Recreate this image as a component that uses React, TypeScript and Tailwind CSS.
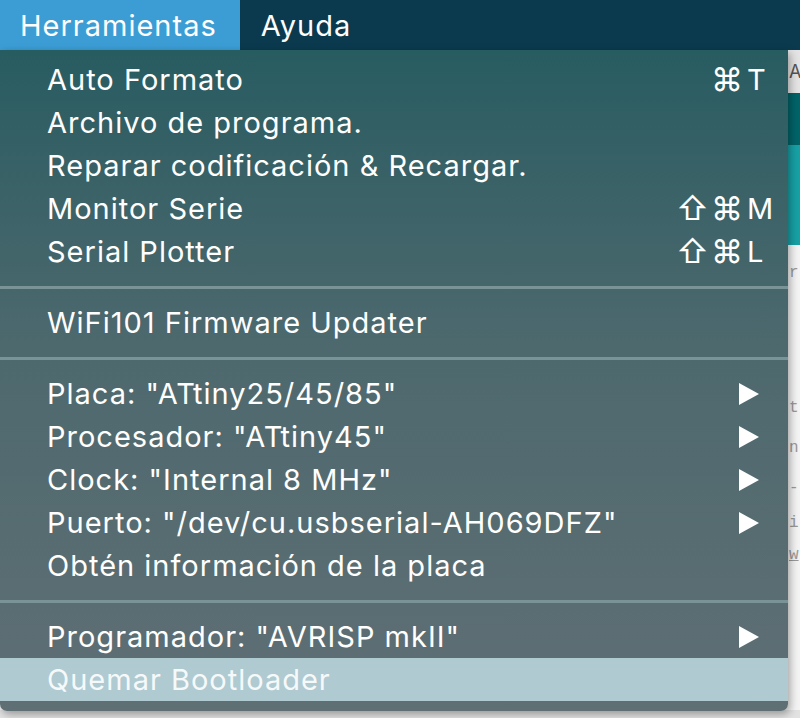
import { Fragment } from 'react'

type Item = {
    label: string
    mods?: string
    keyChar?: string
    submenu?: boolean
    active?: boolean
}

const groups: Item[][] = [
    [
        { label: 'Auto Formato', mods: '⌘', keyChar: 'T' },
        { label: 'Archivo de programa.' },
        { label: 'Reparar codificación & Recargar.' },
        { label: 'Monitor Serie', mods: '⇧⌘', keyChar: 'M' },
        { label: 'Serial Plotter', mods: '⇧⌘', keyChar: 'L' },
    ],
    [{ label: 'WiFi101 Firmware Updater' }],
    [
        { label: 'Placa: "ATtiny25/45/85"', submenu: true },
        { label: 'Procesador: "ATtiny45"', submenu: true },
        { label: 'Clock: "Internal 8 MHz"', submenu: true },
        { label: 'Puerto: "/dev/cu.usbserial-AH069DFZ"', submenu: true },
        { label: 'Obtén información de la placa' },
    ],
    [
        { label: 'Programador: "AVRISP mkII"', submenu: true },
        { label: 'Quemar Bootloader', active: true },
    ],
]

function MenuRow({ item }: { item: Item }) {
    return (
        <div
            className={`flex h-[43px] items-center pl-[47px] pr-[17px] ${item.active ? 'bg-[#afcad1] text-[#f6f9fa]' : 'text-white'
                }`}
        >
            <span className="flex-1 whitespace-nowrap">{item.label}</span>
            {item.keyChar && (
                <span className="flex items-center">
                    <span className="w-[72px] text-right text-[32px] tracking-[2px]">{item.mods}</span>
                    <span className="w-[26px] pl-[2px]">{item.keyChar}</span>
                </span>
            )}
            {item.submenu && (
                <svg width="22" height="22" viewBox="0 0 22 22" className="mr-[11px]">
                    <path d="M1 0 L21 11 L1 22 Z" fill="white" />
                </svg>
            )}
        </div>
    )
}

export default function App() {
    return (
        <div
            className="relative h-[718px] w-[800px] overflow-hidden bg-[#e2e2e2] text-[29px] leading-none tracking-[1px]"
            style={{ fontFamily: 'Inter, "Noto Sans", "DejaVu Sans", sans-serif' }}
        >
            {/* Menu bar */}
            <div className="flex h-[50px] items-center bg-[#0b3a4e] text-white">
                <div className="flex h-full items-center bg-[#3c9dd5] pl-[20px] pr-[23px]">Herramientas</div>
                <div className="flex h-full items-center px-[21px]">Ayuda</div>
            </div>

            {/* Arduino window behind the menu */}
            <div className="flex flex-col tracking-normal">
                <div className="flex h-[43px] items-center bg-[#e4e4e4] pl-[789px] text-[18px] text-[#555]">A</div>
                <div className="h-[52px] bg-[#006468]" />
                <div className="h-[100px] bg-[#17a1a5]" />
                <div className="flex h-[465px] flex-col bg-[#f4f4f4] pl-[789px] font-mono text-[16px] text-[#9a9a9a]">
                    <div className="mt-[20px] h-[40px]">r</div>
                    <div className="mt-[95px] h-[40px]">t</div>
                    <div className="h-[40px]">n</div>
                    <div className="h-[35px]">-</div>
                    <div className="h-[32px]">i</div>
                    <div className="underline">w</div>
                </div>
            </div>

            {/* Herramientas dropdown */}
            <div className="absolute left-0 top-[50px] w-[788px] rounded-b-[7px] bg-gradient-to-b from-[#275c61] via-[#4d696e] via-45% to-[#5f6f74] pb-[10px] pt-[8px] shadow-[2px_3px_8px_rgba(0,0,0,0.35)]">
                {groups.map((group, gi) => (
                    <Fragment key={gi}>
                        {gi > 0 && (
                            <div className="flex h-[28px] items-center">
                                <div className="h-[3px] w-full bg-[#7a9397]" />
                            </div>
                        )}
                        {group.map((item) => (
                            <MenuRow key={item.label} item={item} />
                        ))}
                    </Fragment>
                ))}
            </div>
        </div>
    )
}
